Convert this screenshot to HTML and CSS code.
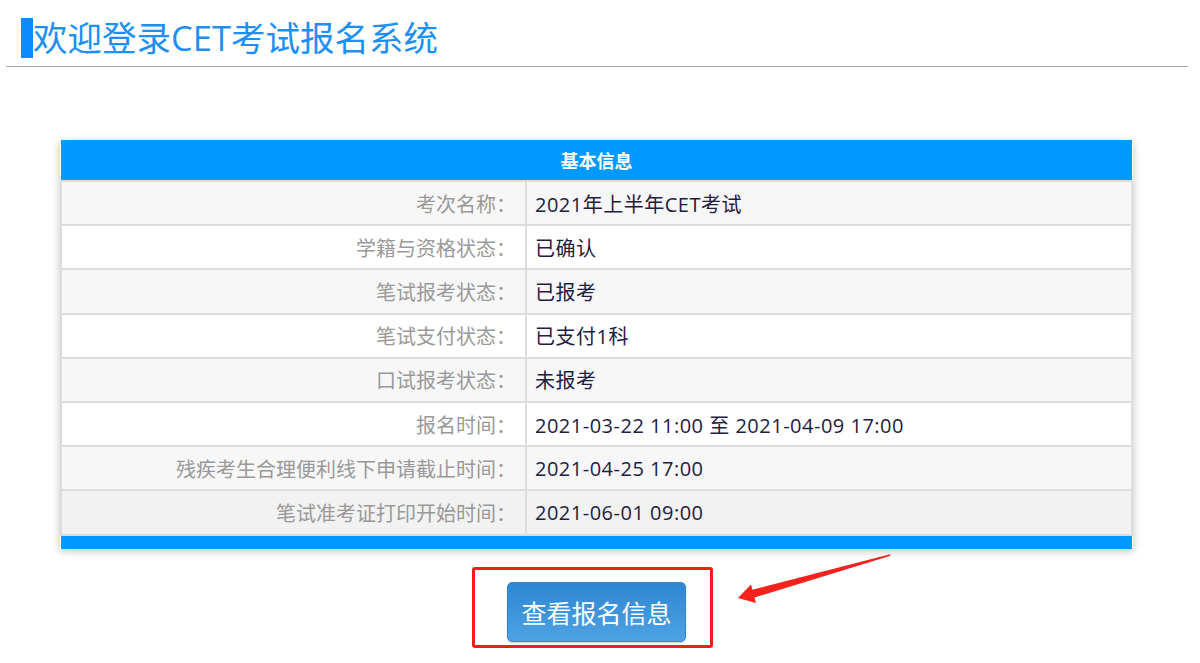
FILE: index.html
```html
<!DOCTYPE html>
<html>
<head>
    <title>CET考试报名系统</title>
    <meta charset="UTF-8">
    <link rel="stylesheet" href="styles.css">
</head>
<body>
    <div class="page-header">
        <h1 class="page-title">欢迎登录CET考试报名系统</h1>
    </div>

    <div class="main">
        <table class="info-table">
            <thead>
                <tr><th colspan="2">基本信息</th></tr>
            </thead>
            <tbody>
                <tr><td class="label">考次名称：</td><td class="value">2021年上半年CET考试</td></tr>
                <tr><td class="label">学籍与资格状态：</td><td class="value">已确认</td></tr>
                <tr><td class="label">笔试报考状态：</td><td class="value">已报考</td></tr>
                <tr><td class="label">笔试支付状态：</td><td class="value">已支付1科</td></tr>
                <tr><td class="label">口试报考状态：</td><td class="value">未报考</td></tr>
                <tr><td class="label">报名时间：</td><td class="value">2021-03-22 11:00 至 2021-04-09 17:00</td></tr>
                <tr><td class="label">残疾考生合理便利线下申请截止时间：</td><td class="value">2021-04-25 17:00</td></tr>
                <tr class="hover"><td class="label">笔试准考证打印开始时间：</td><td class="value">2021-06-01 09:00</td></tr>
            </tbody>
            <tfoot>
                <tr><td colspan="2"></td></tr>
            </tfoot>
        </table>

        <div class="action">
            <div class="highlight">
                <button class="view-btn">查看报名信息</button>
            </div>
        </div>
    </div>

    <!-- annotation arrow -->
    <svg class="arrow" width="1200" height="663" viewBox="0 0 1200 663">
        <polygon fill="#f5211b" points="738,598 751,584.5 752.3,589.8 890,554.3 890.5,555.8 754.5,597.5 756,603"/>
    </svg>
</body>
</html>
```

FILE: styles.css
```css
body {
    margin: 0;
    font-family: "Noto Sans CJK SC", "Noto Sans", sans-serif;
    background-color: #fff;
}

.page-header {
    margin: 0 12px 0 6px;
    padding: 18px 0 8px 15px;
    border-bottom: 1px solid #aaa;
}

.page-title {
    margin: 0;
    font-family: "Open Sans", "Noto Sans CJK SC", sans-serif;
    font-size: 34.5px;
    font-weight: normal;
    line-height: 40px;
    color: #1e8ff5;
    border-left: 12px solid #0a8cff;
    height: 40px;
}

.main {
    padding: 73px 0 0 60px;
    width: 1073px;
}

.info-table {
    width: 100%;
    border-collapse: collapse;
    box-shadow: 0 2px 8px rgba(0, 0, 0, 0.25);
    font-size: 20px;
}

.info-table th {
    height: 40px;
    padding: 0;
    background-color: #0099ff;
    color: #fff;
    font-size: 18px;
    font-weight: bold;
}

.info-table td {
    height: 42.2px;
    padding: 0;
    border: 2px solid #ddd;
}

.info-table tbody tr:nth-child(odd) {
    background-color: #f7f7f7;
}

.info-table tbody tr.hover {
    background-color: #f2f2f2;
}

.info-table .label {
    width: 454px;
    padding-right: 9px;
    text-align: right;
    color: #999;
}

.info-table .value {
    padding-left: 8px;
    font-family: "Open Sans", "Noto Sans CJK SC", sans-serif;
    font-size: 20px;
    letter-spacing: 0.5px;
    color: #1f2040;
}

.info-table tfoot td {
    height: 13px;
    background-color: #0099ff;
    border: none;
}

.action {
    padding-top: 18px;
}

.highlight {
    display: inline-block;
    margin-left: 412px;
    padding: 12px 24px 3px 32px;
    border: 3px solid #f51d16;
    border-radius: 3px;
}

.view-btn {
    width: 179px;
    height: 60px;
    padding: 0;
    font-family: "Noto Sans CJK SC", sans-serif;
    font-size: 25px;
    color: #fff;
    background: linear-gradient(#2f86d2, #4da3e2);
    border: 1px solid #3a84c4;
    border-radius: 5px;
    box-shadow: 0 1px 2px rgba(0, 0, 0, 0.2);
    cursor: pointer;
}

.arrow {
    position: absolute;
    top: 0;
    left: 0;
    pointer-events: none;
}
```
